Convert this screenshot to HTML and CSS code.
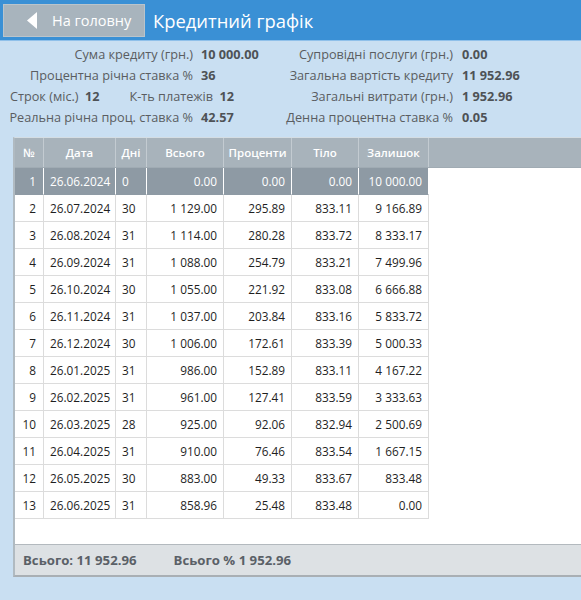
FILE: index.html
```html
<!DOCTYPE html>
<html lang="uk">
<head>
<meta charset="utf-8">
<title>Кредитний графік</title>
<link rel="stylesheet" href="styles.css">
</head>
<body>
<div class="page">
  <header class="topbar">
    <button class="back-btn" type="button">
      <svg class="back-icon" width="10" height="17" viewBox="0 0 10 17"><polygon points="10,0 10,17 0,8.5" fill="#ffffff"/></svg>
      <span>На головну</span>
    </button>
    <h1 class="title">Кредитний графік</h1>
  </header>

  <section class="info">
    <div class="lbl">Сума кредиту (грн.)</div><div class="val">10 000.00</div>
    <div class="lbl">Супровідні послуги (грн.)</div><div class="val val-r">0.00</div>

    <div class="lbl">Процентна річна ставка %</div><div class="val">36</div>
    <div class="lbl">Загальна вартість кредиту</div><div class="val val-r">11 952.96</div>

    <div class="split">
      <span class="pair"><span class="lbl-i">Строк (міс.)</span> <b class="val-i">12</b></span>
      <span class="pair pair-2"><span class="lbl-i">К-ть платежів</span> <b class="val-i">12</b></span>
    </div>
    <div class="lbl">Загальні витрати (грн.)</div><div class="val val-r">1 952.96</div>

    <div class="lbl lbl-wide">Реальна річна проц. ставка %</div><div class="val">42.57</div>
    <div class="lbl">Денна процентна ставка %</div><div class="val val-r">0.05</div>
  </section>

  <section class="grid-box">
    <div class="grid-head">
      <div class="hc c-no">№</div>
      <div class="hc c-date">Дата</div>
      <div class="hc c-days">Дні</div>
      <div class="hc c-total">Всього</div>
      <div class="hc c-int">Проценти</div>
      <div class="hc c-body">Тіло</div>
      <div class="hc c-rest">Залишок</div>
    </div>
    <div class="grid-body">
      <div class="row selected"><div class="c c-no">1</div><div class="c c-date">26.06.2024</div><div class="c c-days">0</div><div class="c c-total">0.00</div><div class="c c-int">0.00</div><div class="c c-body">0.00</div><div class="c c-rest">10 000.00</div></div>
      <div class="row"><div class="c c-no">2</div><div class="c c-date">26.07.2024</div><div class="c c-days">30</div><div class="c c-total">1 129.00</div><div class="c c-int">295.89</div><div class="c c-body">833.11</div><div class="c c-rest">9 166.89</div></div>
      <div class="row"><div class="c c-no">3</div><div class="c c-date">26.08.2024</div><div class="c c-days">31</div><div class="c c-total">1 114.00</div><div class="c c-int">280.28</div><div class="c c-body">833.72</div><div class="c c-rest">8 333.17</div></div>
      <div class="row"><div class="c c-no">4</div><div class="c c-date">26.09.2024</div><div class="c c-days">31</div><div class="c c-total">1 088.00</div><div class="c c-int">254.79</div><div class="c c-body">833.21</div><div class="c c-rest">7 499.96</div></div>
      <div class="row"><div class="c c-no">5</div><div class="c c-date">26.10.2024</div><div class="c c-days">30</div><div class="c c-total">1 055.00</div><div class="c c-int">221.92</div><div class="c c-body">833.08</div><div class="c c-rest">6 666.88</div></div>
      <div class="row"><div class="c c-no">6</div><div class="c c-date">26.11.2024</div><div class="c c-days">31</div><div class="c c-total">1 037.00</div><div class="c c-int">203.84</div><div class="c c-body">833.16</div><div class="c c-rest">5 833.72</div></div>
      <div class="row"><div class="c c-no">7</div><div class="c c-date">26.12.2024</div><div class="c c-days">30</div><div class="c c-total">1 006.00</div><div class="c c-int">172.61</div><div class="c c-body">833.39</div><div class="c c-rest">5 000.33</div></div>
      <div class="row"><div class="c c-no">8</div><div class="c c-date">26.01.2025</div><div class="c c-days">31</div><div class="c c-total">986.00</div><div class="c c-int">152.89</div><div class="c c-body">833.11</div><div class="c c-rest">4 167.22</div></div>
      <div class="row"><div class="c c-no">9</div><div class="c c-date">26.02.2025</div><div class="c c-days">31</div><div class="c c-total">961.00</div><div class="c c-int">127.41</div><div class="c c-body">833.59</div><div class="c c-rest">3 333.63</div></div>
      <div class="row"><div class="c c-no">10</div><div class="c c-date">26.03.2025</div><div class="c c-days">28</div><div class="c c-total">925.00</div><div class="c c-int">92.06</div><div class="c c-body">832.94</div><div class="c c-rest">2 500.69</div></div>
      <div class="row"><div class="c c-no">11</div><div class="c c-date">26.04.2025</div><div class="c c-days">31</div><div class="c c-total">910.00</div><div class="c c-int">76.46</div><div class="c c-body">833.54</div><div class="c c-rest">1 667.15</div></div>
      <div class="row"><div class="c c-no">12</div><div class="c c-date">26.05.2025</div><div class="c c-days">30</div><div class="c c-total">883.00</div><div class="c c-int">49.33</div><div class="c c-body">833.67</div><div class="c c-rest">833.48</div></div>
      <div class="row"><div class="c c-no">13</div><div class="c c-date">26.06.2025</div><div class="c c-days">31</div><div class="c c-total">858.96</div><div class="c c-int">25.48</div><div class="c c-body">833.48</div><div class="c c-rest">0.00</div></div>
    </div>
    <div class="grid-foot">
      <span class="foot-item">Всього: 11 952.96</span>
      <span class="foot-item">Всього % 1 952.96</span>
    </div>
  </section>
</div>
</body>
</html>
```

FILE: styles.css
```css
html, body {
  margin: 0;
  padding: 0;
  width: 581px;
  height: 600px;
  overflow: hidden;
  background: #c9dff2;
  font-family: "Open Sans", "Noto Sans", sans-serif;
}

.page {
  display: flex;
  flex-direction: column;
  height: 600px;
}

.topbar {
  height: 40px;
  background: #3a90d5;
  border-bottom: 1px solid #8fc0ea;
  display: flex;
  align-items: center;
  box-sizing: content-box;
}

.back-btn {
  margin-left: 3px;
  width: 142px;
  height: 33px;
  background: #a8b4bd;
  border: 1px solid #bac4cb;
  display: flex;
  align-items: center;
  padding: 0 0 0 23px;
  gap: 15px;
  color: #ffffff;
  font-family: inherit;
  font-size: 14.5px;
  box-sizing: border-box;
}

.back-icon {
  display: block;
}

.title {
  margin: 0 0 0 8px;
  font-size: 18.4px;
  font-weight: 400;
  color: #ffffff;
}

.info {
  display: grid;
  grid-template-columns: 193px 84px 176px 1fr;
  grid-auto-rows: 20.8px;
  align-items: center;
  padding-top: 3px;
  font-size: 12.7px;
  color: #5a5d61;
  line-height: 20px;
}

.lbl {
  text-align: right;
  white-space: nowrap;
}

.val {
  padding-left: 8px;
  font-weight: 700;
  color: #4e5256;
  white-space: nowrap;
}

.val-r {
  padding-left: 9px;
}

.split {
  grid-column: 1 / 3;
  display: flex;
  padding-left: 10px;
  white-space: nowrap;
}

.pair-2 {
  margin-left: 30px;
}

.val-i {
  color: #4e5256;
  margin-left: 3px;
}

.grid-box {
  margin: 10px 0 0 13px;
  height: 440px;
  width: 568px;
  background: #ffffff;
  border-left: 2px solid #b0bac1;
  border-top: 1px solid #d4dde3;
  border-bottom: 2px solid #a9afb4;
  display: flex;
  flex-direction: column;
  box-sizing: border-box;
}

.grid-head {
  display: flex;
  height: 29px;
  background: #a8b3bb;
  border-bottom: 1px solid #a0abb3;
  box-sizing: content-box;
}

.hc {
  display: flex;
  align-items: center;
  justify-content: center;
  color: #ffffff;
  font-size: 11.5px;
  font-weight: 600;
  border-right: 1px solid #c3cbd1;
  box-sizing: border-box;
}

.c-no { width: 29px; }
.c-date { width: 72px; }
.c-days { width: 31px; }
.c-total { width: 77px; }
.c-int { width: 68px; }
.c-body { width: 67px; }
.c-rest { width: 70px; }

.grid-body {
  flex: 1;
}

.row {
  display: flex;
  height: 27px;
}

.c {
  display: flex;
  align-items: center;
  justify-content: flex-end;
  padding: 0 6px;
  font-size: 11.8px;
  color: #1f1f1f;
  border-right: 1px solid #dcdcdc;
  border-bottom: 1px solid #dcdcdc;
  box-sizing: border-box;
  white-space: nowrap;
}

.c.c-date, .c.c-days {
  justify-content: flex-start;
}

.c.c-no {
  padding-right: 7px;
}

.row.selected .c {
  background: #8e9aa4;
  color: #ffffff;
  border-right-color: #ffffff;
  border-bottom-color: #8e9aa4;
}

.grid-foot {
  height: 31px;
  background: #dde1e4;
  border-top: 1px solid #b3b9be;
  display: flex;
  align-items: center;
  gap: 37px;
  padding-left: 8px;
  font-size: 13.2px;
  font-weight: 700;
  color: #5a6067;
  box-sizing: border-box;
}
```
